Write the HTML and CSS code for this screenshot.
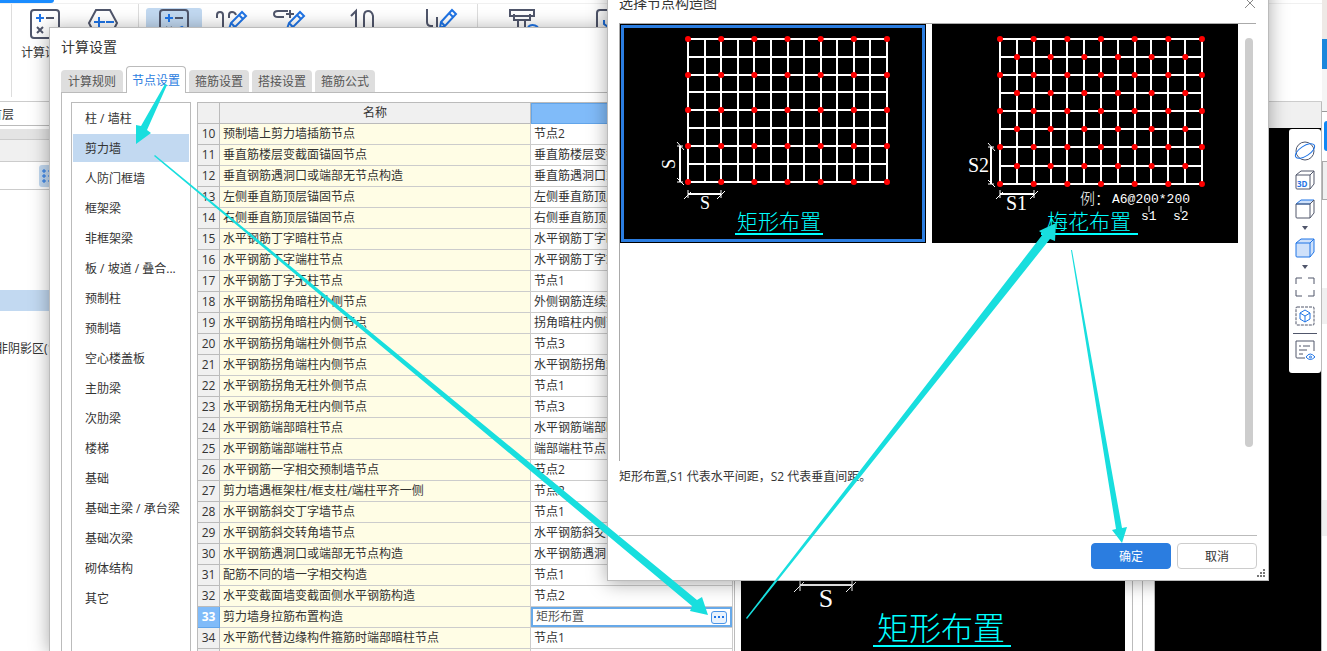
FILE: index.html
```html
<!DOCTYPE html>
<html lang="zh-CN">
<head>
<meta charset="utf-8">
<title>计算设置</title>
<link rel="stylesheet" href="styles.css">
</head>
<body>
<div class="desktop">
  <div class="app">
    <div class="workspace">
      <header class="ribbon">
        <div class="ribbon-tab"></div>
        <div class="tools">
          <div class="group">
            <button class="tool"><svg class="icon" viewBox="0 0 30 30"><rect x="1" y="1" width="28" height="28" rx="3"/><path class="blue" d="M6 9h8M10 5v8M19 20h6M19 24h6"/><path d="M16 9h8M7 18l6 6M13 18l-6 6"/></svg><span>计算设置</span></button>
            <button class="tool" aria-label="比重设置"><svg class="icon" viewBox="0 0 30 30"><path d="M8 1h14l7 13-7 14H8L1 14z"/><path class="blue" d="M6 13h11M11 8v11M18 13h8"/></svg></button>
          </div>
          <div class="group">
            <button class="tool tool-on" aria-label="计算"><svg class="icon" viewBox="0 0 30 30"><rect x="1" y="1" width="28" height="28" rx="3"/><path class="blue" d="M6 9h8M10 5v8M19 20l4-2 3 2"/><path d="M16 9h8M7 18l6 6M13 18l-6 6"/></svg></button>
            <button class="tool" aria-label="弯钩"><svg class="icon" viewBox="0 0 30 30"><path d="M0 9V6q0-3 3-3t3 3v23M12 9V6q0-3 3-3t4 3"/><path class="blue thin" d="M12 20l2-6L25 3l4 4-11 11zM22 6l4 4M14 14l4 4"/></svg></button>
            <button class="tool" aria-label="弯折"><svg class="icon" viewBox="0 0 30 30"><path d="M13 2H3q-4 0-4 3t4 3h6M11 5h8M15 1v8"/><path class="blue thin" d="M12 20l2-6L25 3l4 4-11 11zM22 6l4 4M14 14l4 4"/></svg></button>
            <button class="tool tool-m" aria-label="直径"><svg class="icon" viewBox="0 0 30 30"><path d="M4 7l5-5v27M17 29V7q0-5 4-5t5 5v22"/></svg></button>
            <button class="tool tool-s" aria-label="弯曲"><svg class="icon" viewBox="0 0 30 30"><path d="M2 0v13q0 4 4 4h2M12 8v10"/><path class="blue thin" d="M15 19l1-6L27 1l4 4-11 12zM24 4l4 4M16 13l4 4"/></svg></button>
          </div>
          <div class="group">
            <button class="tool tool-m" aria-label="构件"><svg class="icon" viewBox="0 0 30 30"><path d="M3 1h24v6H3zM7 5v6h16V5M11 11v18M18 11v18"/><path class="blue" d="M21 18q4-4 10 0"/></svg></button>
            <button class="tool tool-l" aria-label="检查"><svg class="icon" viewBox="0 0 30 30"><rect x="1" y="1" width="28" height="28" rx="3"/><path class="blue" d="M8 11v4l4 3"/></svg></button>
          </div>
        </div>
      </header>
      <div class="stage">
        <aside class="nav">
          <div class="nav-combo">首层</div>
          <div class="nav-bar"></div>
          <div class="nav-head"></div>
          <div class="nav-view"><svg class="view-icon" viewBox="0 0 22 22"><path d="M4 5h2v2H4zM4 10h2v2H4zM4 15h2v2H4zM9 6h6M9 11h6M9 16h6"/></svg></div>
          <div class="nav-tree">
            <div class="nav-sel"></div>
            <div class="nav-item">非阴影区(1</div>
          </div>
        </aside>
        <div class="view">
          <div class="view-head"></div>
          <div class="canvas">
            <div class="viewbar">
              <button aria-label="动态观察"><svg viewBox="0 0 20 20"><circle cx="10" cy="10" r="9"/><ellipse class="blue" cx="10" cy="10" rx="11" ry="5" transform="rotate(-33 10 10)"/></svg></button>
              <button aria-label="三维"><svg viewBox="0 0 20 20"><path d="M1 5h14v14H2q-1 0-1-1zM1 5l5-4h13v13l-4 5M15 5l4-4"/><text x="2" y="17">3D</text></svg></button>
              <button aria-label="俯视"><svg viewBox="0 0 20 20"><path class="blue fill" d="M1 5l5-4h13l-4 4z"/><path d="M1 5h14v14H2q-1 0-1-1zM19 1v13l-4 5M15 5l4-4"/></svg></button>
              <i class="caret"></i>
              <button aria-label="实体"><svg viewBox="0 0 20 20"><path class="blue fill" d="M1 5l5-4h13v13l-4 5H2q-1 0-1-1zM1 5h14v14M15 5l4-4"/></svg></button>
              <i class="caret"></i>
              <button aria-label="全屏"><svg viewBox="0 0 20 20"><path d="M1 7V1h6M13 1h6v6M19 13v6h-6M7 19H1v-6"/></svg></button>
              <button aria-label="局部三维"><svg viewBox="0 0 20 20"><rect x="1" y="1" width="18" height="18" rx="1" stroke-dasharray="3 1"/><path class="blue" d="M10 4l5 3v6l-5 3-5-3V7zM5 7l5 3 5-3M10 10v6"/></svg></button>
              <i class="rule"></i>
              <button aria-label="显示设置"><svg viewBox="0 0 20 20"><path d="M10 18H2q-1 0-1-1V1h18v10M4 6h2M8 6h7M4 10h8M4 14h4"/><path class="blue" d="M11 17q4-6 9 0-5 5-9 0z"/><circle class="blue" cx="15.500" cy="17" r="1"/></svg></button>
            </div>
          </div>
        </div>
      </div>
    </div>
    <div class="dock">
      <div class="dock-photo"></div><div class="dock-blue"></div><div class="dock-gap"></div><div class="dock-tab"></div><div class="dock-box"></div><div class="dock-body"></div><div class="dock-sel"></div><div class="dock-rest"></div>
    </div>
  </div>

  <section class="dialog settings">
    <h1 class="title">计算设置</h1>
    <nav class="tabs">
      <button class="tab tab-first">计算规则</button>
      <button class="tab tab-on">节点设置</button>
      <button class="tab">箍筋设置</button>
      <button class="tab">搭接设置</button>
      <button class="tab">箍筋公式</button>
    </nav>
    <div class="panel">
      <ul class="kinds">
        <li>柱 / 墙柱</li>
        <li class="on">剪力墙</li>
        <li>人防门框墙</li>
        <li>框架梁</li>
        <li>非框架梁</li>
        <li>板 / 坡道 / 叠合...</li>
        <li>预制柱</li>
        <li>预制墙</li>
        <li>空心楼盖板</li>
        <li>主肋梁</li>
        <li>次肋梁</li>
        <li>楼梯</li>
        <li>基础</li>
        <li>基础主梁 / 承台梁</li>
        <li>基础次梁</li>
        <li>砌体结构</li>
        <li>其它</li>
      </ul>
      <table class="nodes">
        <colgroup><col class="c-no"><col class="c-name"><col class="c-val"></colgroup>
        <thead><tr><th></th><th>名称</th><th class="picked"></th></tr></thead>
        <tbody>
          <tr><th>10</th><td>预制墙上剪力墙插筋节点</td><td>节点2</td></tr>
          <tr><th>11</th><td>垂直筋楼层变截面锚固节点</td><td>垂直筋楼层变截</td></tr>
          <tr><th>12</th><td>垂直钢筋遇洞口或端部无节点构造</td><td>垂直筋遇洞口或</td></tr>
          <tr><th>13</th><td>左侧垂直筋顶层锚固节点</td><td>左侧垂直筋顶层</td></tr>
          <tr><th>14</th><td>右侧垂直筋顶层锚固节点</td><td>右侧垂直筋顶层</td></tr>
          <tr><th>15</th><td>水平钢筋丁字暗柱节点</td><td>水平钢筋丁字暗</td></tr>
          <tr><th>16</th><td>水平钢筋丁字端柱节点</td><td>水平钢筋丁字端</td></tr>
          <tr><th>17</th><td>水平钢筋丁字无柱节点</td><td>节点1</td></tr>
          <tr><th>18</th><td>水平钢筋拐角暗柱外侧节点</td><td>外侧钢筋连续通</td></tr>
          <tr><th>19</th><td>水平钢筋拐角暗柱内侧节点</td><td>拐角暗柱内侧节</td></tr>
          <tr><th>20</th><td>水平钢筋拐角端柱外侧节点</td><td>节点3</td></tr>
          <tr><th>21</th><td>水平钢筋拐角端柱内侧节点</td><td>水平钢筋拐角端</td></tr>
          <tr><th>22</th><td>水平钢筋拐角无柱外侧节点</td><td>节点1</td></tr>
          <tr><th>23</th><td>水平钢筋拐角无柱内侧节点</td><td>节点3</td></tr>
          <tr><th>24</th><td>水平钢筋端部暗柱节点</td><td>水平钢筋端部暗</td></tr>
          <tr><th>25</th><td>水平钢筋端部端柱节点</td><td>端部端柱节点</td></tr>
          <tr><th>26</th><td>水平钢筋一字相交预制墙节点</td><td>节点2</td></tr>
          <tr><th>27</th><td>剪力墙遇框架柱/框支柱/端柱平齐一侧</td><td>节点2</td></tr>
          <tr><th>28</th><td>水平钢筋斜交丁字墙节点</td><td>节点1</td></tr>
          <tr><th>29</th><td>水平钢筋斜交转角墙节点</td><td>水平钢筋斜交</td></tr>
          <tr><th>30</th><td>水平钢筋遇洞口或端部无节点构造</td><td>水平钢筋遇洞</td></tr>
          <tr><th>31</th><td>配筋不同的墙一字相交构造</td><td>节点1</td></tr>
          <tr><th>32</th><td>水平变截面墙变截面侧水平钢筋构造</td><td>节点2</td></tr>
          <tr class="current"><th>33</th><td>剪力墙身拉筋布置构造</td><td><div class="editor"><input type="text" value="矩形布置" aria-label="剪力墙身拉筋布置构造"><button class="more" aria-label="选择"><i></i><i></i><i></i></button></div></td></tr>
          <tr><th>34</th><td>水平筋代替边缘构件箍筋时端部暗柱节点</td><td>节点1</td></tr>
          <tr><th></th><td></td><td></td></tr>
        </tbody>
      </table>
      <div class="preview">
        <div class="preview-box">
          <svg class="cad" viewBox="0 0 384 72" preserveAspectRatio="xMinYMax meet">
            <path class="line" d="M59 6H111"/><path class="tick" d="M59 2v10M111 2v10M53 13L63 3M105 13L115 3"/>
            <text class="dim" x="85" y="28" font-size="26" text-anchor="middle">S</text>
            <text class="cap" x="136" y="61" font-size="32">矩形布置</text>
            <path class="under" d="M132 67H270"/>
          </svg>
        </div>
      </div>
      <div class="side-rule"></div>
    </div>
  </section>

  <section class="dialog chooser">
    <header class="chooser-head">
      <h2 class="title">选择节点构造图</h2>
      <button class="close" aria-label="关闭"><svg viewBox="0 0 12 12"><path d="M1 1l10 10M11 1L1 11"/></svg></button>
    </header>
    <div class="gallery">
      <div class="thumbs">
        <button class="thumb thumb-on" aria-label="矩形布置">
          <svg class="cad" viewBox="0 0 306 219">
            <path class="line" d="M67 15H268M67 33H268M67 51H268M67 68H268M67 86H268M67 104H268M67 122H268M67 140H268M67 158H268M68 15V158M85 15V158M101 15V158M118 15V158M134 15V158M151 15V158M168 15V158M184 15V158M201 15V158M217 15V158M234 15V158M250 15V158M267 15V158"/>
            <path class="dots" stroke-dasharray="0 33.170" d="M68 15h200M68 51h200M68 86h200M68 122h200M68 158h200"/>
            <path class="line" d="M60 122V158M68 170H101"/>
            <path class="tick" d="M57 118l7 8M57 154l7 7M57 122h6M57 158h6M68 166v8M101 166v8M64 175l7-7M97 175l8-8"/>
            <text class="dim" x="85" y="185" font-size="18" text-anchor="middle">S</text>
            <text class="dim" font-size="18" text-anchor="middle" transform="translate(55 140) rotate(-90)">S</text>
            <text class="cap" x="117" y="205" font-size="21">矩形布置</text>
            <path class="under" d="M115 210H203"/>
          </svg>
        </button>
        <button class="thumb" aria-label="梅花布置">
          <svg class="cad" viewBox="0 0 306 219">
            <path class="line" d="M67 15H271M67 33H271M67 51H271M67 69H271M67 87H271M67 105H271M67 123H271M67 142H271M67 160H271M68 15V160M85 15V160M102 15V160M119 15V160M135 15V160M152 15V160M169 15V160M186 15V160M203 15V160M219 15V160M236 15V160M253 15V160M270 15V160"/>
            <path class="dots" stroke-dasharray="0 33.660" d="M68 15h203M68 51h203M68 87h203M68 123h203M68 160h203M85 33h169M85 69h169M85 105h169M85 142h169"/>
            <path class="line" d="M59 123V160M68 170H102"/>
            <path class="tick" d="M56 119l7 8M56 156l7 7M56 123h6M56 160h6M68 166v8M102 166v8M64 175l7-7M98 175l8-8M217 182v6M249 182v6"/>
            <text class="dim" x="36" y="148" font-size="20">S2</text>
            <text class="dim" x="74" y="186" font-size="20">S1</text>
            <text class="dim" x="148" y="180" font-size="15">例：</text>
            <text class="note" x="180" y="179" font-size="13">A6@200*200</text>
            <text class="note" x="209" y="196" font-size="13">s1</text>
            <text class="note" x="241" y="196" font-size="13">s2</text>
            <text class="cap" x="115" y="205" font-size="21">梅花布置</text>
            <path class="under" d="M109 210H206"/>
          </svg>
        </button>
      </div>
      <div class="scroll"></div>
    </div>
    <p class="hint">矩形布置,S1 代表水平间距，S2 代表垂直间距。</p>
    <footer class="actions">
      <button class="btn primary">确定</button>
      <button class="btn">取消</button>
    </footer>
    <svg class="grip" viewBox="0 0 8 8"><path d="M6 0h2v2H6zM3 3h2v2H3zM6 3h2v2H6zM0 6h2v2H0zM3 6h2v2H3zM6 6h2v2H6z"/></svg>
  </section>

  <svg class="arrows" width="1327" height="651" viewBox="0 0 1327 651">
    <path d="M165 84L141 126 136 125V144L151 133 147 130 167 85Z"/>
    <path d="M154 156L692 606 690 611 708 615 702 597 697 600 155 155Z"/>
    <path d="M746 618L1043 234 1039 231 1056 223 1055 241 1050 239 747 619Z"/>
    <path d="M1071 250L1116 529 1112 530 1122 543 1127 527 1122 528 1072 250Z"/>
  </svg>
</div>
</body>
</html>
```
FILE: styles.css
```css
* { box-sizing: border-box; }
body, h1, h2, p, ul { margin: 0; padding: 0; }
body, button, input {
  font-family: "Open Sans", "Noto Sans CJK SC", sans-serif;
  font-size: 12px;
  line-height: 20px;
  color: #333;
}
button { border: 0; padding: 0; background: none; }
svg { display: block; overflow: visible; }

.desktop { position: relative; height: 100vh; overflow: hidden; background: #fff; }

/* main window */
.app { display: flex; height: 100%; }
.workspace { flex: 1; display: flex; flex-direction: column; min-width: 0; }
.ribbon { height: 102px; border-bottom: 1px solid #ccc; }
.ribbon-tab { width: 54px; height: 3px; background: #1a8cff; border-radius: 0 0 4px 0; }
.tools { display: flex; height: 94px; border-top: 1px solid #f0f0f0; overflow: hidden; }
.group { display: flex; gap: 2px; padding: 4px 3px 0 7px; border-left: 1px solid #ddd; }
.group:first-child { margin-left: 11px; padding: 4px 7px 0 5px; }
.group:last-child { padding-left: 2px; }
.tool { display: flex; flex-direction: column; align-items: center; width: 56px; height: 84px; padding-top: 1px; gap: 4px; border-radius: 3px; white-space: nowrap; }
.tool-on { background: #c2d9f1; }
.tool-m { width: 84px; }
.tool-s { width: 68px; }
.tool-l { width: 90px; }
.icon { width: 30px; height: 30px; fill: none; stroke: #50566b; stroke-width: 2; }
.icon .blue { stroke: #1f74e6; }
.icon .thin { stroke-width: 2; }

.stage { flex: 1; display: flex; min-height: 0; }
.nav { width: 180px; display: flex; flex-direction: column; background: #fff; }
.nav-combo { height: 24px; padding-top: 3px; border-bottom: 1px solid #bbb; text-indent: -10px; }
.nav-bar { height: 14px; background: #e4e4e4; border-top: 3px solid #fff; border-bottom: 1px solid #ccc; }
.nav-head { height: 22px; background: #f0f0f0; border-bottom: 1px solid #ccc; }
.nav-view { height: 28px; padding: 3px 0 0 39px; border-bottom: 1px solid #ccc; }
.view-icon { width: 22px; height: 22px; background: #c2d9f1; border-radius: 3px; fill: none; stroke: #1f74e6; }
.nav-tree { padding-top: 100px; }
.nav-sel { height: 21px; background: #c2d9f1; }
.nav-item { margin-top: 28px; text-indent: -4px; }
.view { flex: 1; display: flex; flex-direction: column; border-right: 1px solid #bbb; }
.view-head { height: 26px; background: #f0f0f0; }
.canvas { flex: 1; display: flex; justify-content: flex-end; align-items: flex-start; padding-top: 1px; background: #000; }
.viewbar { display: flex; flex-direction: column; align-items: center; width: 32px; padding: 7px 0 9px; background: #fff; border-radius: 3px; }
.viewbar button { display: flex; align-items: center; height: 29px; }
.viewbar svg { width: 20px; height: 20px; fill: none; stroke: #50566b; stroke-width: 1; }
.viewbar .blue { stroke: #1f74e6; }
.viewbar .fill { fill: #cfe1fa; }
.viewbar text { font-size: 8px; font-weight: 700; fill: #1f74e6; stroke: none; }
.caret { height: 4px; margin: 3px 0; border: 3px solid transparent; border-top: 4px solid #50566b; border-bottom-width: 0; }
.rule { width: 24px; height: 1px; margin: 3px 0 1px; background: #50566b; }

.dock { width: 5px; display: flex; flex-direction: column; background: #fff; }
.dock-photo { height: 39px; background: #eee9e6; }
.dock-blue { height: 30px; background: #1b87dc; }
.dock-gap { height: 43px; background: #f5f5f5; border-bottom: 1px solid #999; }
.dock-tab { height: 30px; margin: 9px 0 10px 2px; background: #1088f5; border-radius: 4px 0 0 4px; }
.dock-box { height: 39px; background: #f0f0f0; border: 1px solid #aaa; border-right: 0; }
.dock-body { height: 88px; }
.dock-sel { height: 36px; background: #f0f0f0; }
.dock-rest { height: 36px; margin-top: 176px; background: #f0f0f0; }

/* windows */
.dialog { position: absolute; background: #fff; border: 1px solid #bbb; box-shadow: 0 2px 18px rgba(0, 0, 0, .35); }
.title { font-size: 14px; font-weight: 400; line-height: 20px; }

.settings { left: 49px; right: 172px; top: 27px; bottom: 0; display: flex; flex-direction: column; border-bottom: 0; }
.settings .title { padding: 9px 11px; }
.tabs { position: relative; display: flex; align-items: flex-end; gap: 3px; height: 27px; padding: 0 11px; margin-bottom: -1px; }
.tab { width: 60px; height: 22px; margin-bottom: 1px; padding-top: 1px; background: #dedede; border-radius: 4px 4px 0 0; color: #555; }
.tab-first { width: 62px; }
.tab-on { height: 27px; margin-bottom: 0; background: #fff; border: 1px solid #bbb; border-bottom: 0; color: #2b7de0; }
.panel { flex: 1; display: flex; min-height: 0; margin-left: 11px; padding: 9px 11px 0 9px; border: 1px solid #bbb; border-width: 1px 0 0 1px; }
.kinds { width: 120px; margin-right: 6px; padding: 1px; border: 1px solid #bbb; border-bottom: 0; list-style: none; }
.kinds li { height: 28px; margin-bottom: 2px; padding: 5px 0 3px 12px; white-space: nowrap; }
.kinds .on { background: #c2d9f1; }
.nodes { width: 536px; height: 0; flex: none; align-self: flex-start; table-layout: fixed; border-collapse: separate; border-spacing: 0; border: 1px solid #bbb; border-width: 1px 0 0 1px; }
.c-no { width: 22px; }
.c-name { width: 311px; }
.nodes th, .nodes td { height: 21px; padding: 0 3px; border: 1px solid #ccc; border-width: 0 1px 1px 0; font-weight: 400; line-height: 20px; white-space: nowrap; overflow: hidden; text-align: left; }
.nodes th { padding: 0; background: #f0f0f0; border-color: #bbb; text-align: center; }
.nodes tr td:nth-child(2) { background: #fffde5; }
.nodes .picked { background: #80bbf9; border: 1px solid #62a5ea; }
.nodes .current th { background: #80bbf9; border-color: #62a5ea; color: #fff; font-weight: 700; }
.nodes .current td:nth-child(3) { padding: 0; }
.editor { display: flex; align-items: center; height: 20px; padding: 0 3px; border: 2px solid #67a9e9; }
.editor input { flex: 1; min-width: 0; height: 16px; padding: 0; border: 0; outline: 0; line-height: 16px; color: #555; }
.more { display: flex; justify-content: center; align-items: center; gap: 2px; width: 16px; height: 13px; border: 1px solid #4a95e8; border-radius: 3px; background: #eaf3fd; }
.more i { width: 2px; height: 2px; background: #1f74e6; }
.preview { flex: 1; display: flex; margin: -9px 0 0 1px; padding: 0 7px 0 6px; border: 1px solid #bbb; border-width: 0 1px; }
.preview-box { flex: 1; display: flex; align-items: flex-end; background: #000; }
.preview-box .cad { width: 384px; height: 72px; }
.side-rule { margin: -9px 0 0 9px; border-left: 1px solid #bbb; }

/* drawings */
.cad { fill: none; }
.cad .line { stroke: #fff; stroke-width: 2; }
.cad .tick { stroke: #fff; stroke-width: 1; }
.cad .dots { stroke: #f00; stroke-width: 6; stroke-linecap: round; }
.cad .under { stroke: #0ff; stroke-width: 2; }
.cad .dim { fill: #fff; font-family: "Liberation Serif", "Noto Sans CJK SC", serif; font-weight: 300; }
.cad .note { fill: #fff; font-family: "Liberation Mono", monospace; }
.cad .cap { fill: #0ff; font-family: "Noto Sans CJK SC", sans-serif; font-weight: 300; }

.chooser { left: 607px; right: 58px; top: -20px; display: flex; flex-direction: column; height: 601px; padding: 0 11px 11px; }
.chooser-head { display: flex; justify-content: space-between; align-items: center; height: 42px; padding-top: 2px; }
.close { width: 12px; margin-right: 1px; }
.close svg { fill: none; stroke: #888; }
.gallery { display: flex; justify-content: space-between; height: 438px; margin-right: 1px; padding-right: 3px; border: 1px solid #aaa; border-width: 1px 0 0 1px; }
.thumbs { display: flex; align-items: flex-start; gap: 6px; }
.thumb { width: 306px; height: 219px; background: #000; }
.thumb-on { box-shadow: inset 0 0 0 1px #000, inset 0 0 0 4px #2b7de0; }
.thumb .cad { width: 306px; height: 219px; }
.scroll { width: 8px; height: 409px; margin-top: 14px; border-radius: 4px; background: #cdcdcd; }
.hint { margin-top: 6px; padding-bottom: 48px; border-bottom: 1px solid #bbb; }
.actions { display: flex; justify-content: flex-end; gap: 6px; margin-top: 7px; }
.btn { width: 80px; height: 26px; padding-top: 2px; border: 1px solid #ccc; border-radius: 4px; background: #fff; }
.primary { border-color: #2b7de0; background: #2b7de0; color: #fff; }
.grip { position: absolute; right: 3px; bottom: 3px; width: 8px; height: 8px; fill: #777; }

.arrows { position: absolute; left: 0; top: 0; fill: #18dede; pointer-events: none; }
```
